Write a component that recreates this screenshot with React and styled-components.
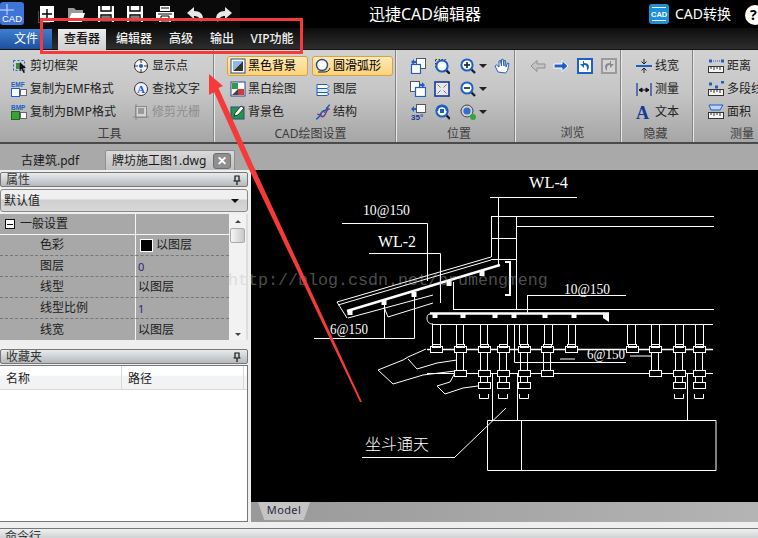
import React from 'react'
import styled, { createGlobalStyle } from 'styled-components'

const GlobalStyle = createGlobalStyle`
    html, body { margin:0; padding:0; background:#000; }
    * { box-sizing:border-box; }
`
const FONT = `"Noto Sans", "Noto Sans CJK SC", sans-serif`

const Page = styled.div`
    position:relative;
    width:758px;
    height:538px;
    overflow:hidden;
    display:flex;
    flex-direction:column;
    background:#efefef;
    font-family:${FONT};
    font-size:12px;
    color:#1a1a1a;
    line-height:1;
`
/* ---------- title bar ---------- */
const TitleBar = styled.div`
    height:28px;
    background:#000;
    display:flex;
    align-items:center;
    color:#fff;
`
const QuickBar = styled.div`
    display:flex;
    align-items:center;
    gap:13px;
    width:240px;
    padding-left:38px;
    height:28px;
    background:#0a0a0a;
`
const AppTitle = styled.div`
    flex:1;
    text-align:center;
    padding-right:38px;
    font-size:16px;
`
const ConvertBox = styled.div`
    display:flex;
    align-items:center;
    gap:6px;
    width:110px;
    padding-left:1px;
    font-size:14px;
`
const HelpDot = styled.div`
    position:absolute;
    left:745px;
    top:5px;
    width:20px;
    height:20px;
    border-radius:50%;
    background:#fff;
    color:#000;
    font-weight:700;
    font-size:14px;
    line-height:20px;
    padding-left:5px;
`
const LogoWrap = styled.div`
    position:absolute;
    left:0;
    top:2px;
`
/* ---------- ribbon tabs ---------- */
const TabRow = styled.div`
    height:22px;
    display:flex;
    align-items:flex-end;
    background:linear-gradient(#0d0d0d, #2e2e2e);
    border-bottom:1px solid #141414;
`
const FileButton = styled.div`
    width:52px;
    height:20px;
    margin-right:6px;
    background:linear-gradient(#3f7fd0, #1d4f9e);
    color:#fff;
    text-align:center;
    line-height:20px;
    font-size:12px;
`
const RibbonTab = styled.div`
    height:${({ $active }) => ($active ? 21 : 20)}px;
    width:${({ $w }) => $w}px;
    margin-right:${({ $gap }) => $gap}px;
    text-align:center;
    line-height:20px;
    font-weight:500;
    color:${({ $active }) => ($active ? '#111' : '#f2f2f2')};
    background:${({ $active }) => ($active ? 'linear-gradient(#ececec, #cfcfcf)' : 'transparent')};
    margin-bottom:${({ $active }) => ($active ? -1 : 0)}px;
`
/* ---------- ribbon ---------- */
const Ribbon = styled.div`
    height:94px;
    display:flex;
    background:linear-gradient(#d2d2d2, #c6c6c6 45%, #a6a6a6);
    border-bottom:2px solid #4a4a4a;
`
const Group = styled.div`
    width:${({ $w }) => $w}px;
    flex:none;
    display:flex;
    flex-direction:column;
    padding-top:4px;
    padding-left:${({ $pad }) => $pad || 0}px;
    border-right:1px solid #848484;
    box-shadow:1px 0 0 #e8e8e8;
    margin-right:2px;
    &:last-child { border-right:none; box-shadow:none; margin-right:0; }
`
const ToolGrid = styled.div`
    flex:1;
    display:grid;
    grid-template-columns:${({ $cols }) => $cols};
    grid-auto-rows:23px;
    align-items:center;
`
const GroupLabel = styled.div`
    height:20px;
    margin-left:-${({ $pad }) => $pad || 0}px;
    padding-left:${({ $shift = 0 }) => Math.max($shift * 2, 0)}px;
    padding-right:${({ $shift = 0 }) => Math.max(-$shift * 2, 0)}px;
    text-align:center;
    color:#3c3c3c;
    font-size:12px;
    line-height:22px;
`
const Tool = styled.div`
    display:flex;
    align-items:center;
    gap:${({ $gap }) => $gap ?? 3}px;
    white-space:nowrap;
    color:${({ $off }) => ($off ? '#8e8e8e' : '#222')};
    ${({ $on }) => $on && `
        height:20px;
        width:81px;
        margin-left:-3px;
        padding-left:2px;
        border:1px solid #d9a23c;
        border-radius:3px;
        background:linear-gradient(#fdeab8, #fbd27a);
        color:#000;
    `}
`
const Caret = styled.span`
    width:0;
    height:0;
    border-left:4px solid transparent;
    border-right:4px solid transparent;
    border-top:4px solid #222;
    margin-left:3px;
`
/* ---------- document tabs ---------- */
const DocStrip = styled.div`
    height:26px;
    display:flex;
    align-items:flex-end;
    padding-left:21px;
    background:#a9a9a9;
`
const DocTab = styled.div`
    height:${({ $active }) => ($active ? 20 : 18)}px;
    display:flex;
    align-items:center;
    gap:7px;
    ${({ $active }) => ($active
        ? `padding:0 3px 0 6px; background:linear-gradient(#dadada,#c0c0c0); border:1px solid #8f8f8f; border-bottom:none; border-radius:2px 2px 0 0; margin-left:26px;`
        : '')}
`
const CloseBox = styled.div`
    width:18px;
    height:16px;
    border:1px solid #6f6f6f;
    border-radius:3px;
    background:#8f8f8f;
    color:#fff;
    font-size:12px;
    font-weight:700;
    text-align:center;
    line-height:14px;
`
/* ---------- body ---------- */
const Body = styled.div`
    height:352px;
    display:flex;
`
const SidePanel = styled.div`
    width:248px;
    flex:none;
    display:flex;
    flex-direction:column;
    padding-top:2px;
`
const PanelHeader = styled.div`
    height:15px;
    flex:none;
    display:flex;
    justify-content:space-between;
    align-items:center;
    padding:0 5px;
    border:1px solid #777;
    border-radius:2px;
    background:linear-gradient(#e9ebec, #b5b9bd);
    color:#333;
`
const Picker = styled.div`
    height:23px;
    margin-top:2px;
    flex:none;
    display:flex;
    justify-content:space-between;
    align-items:center;
    padding:0 3px;
    border:1px solid #8a8a8a;
    border-radius:3px;
    background:linear-gradient(#f0f0f0, #f0f0f0 40%, #cfcfcf 50%, #d8d8d8);
    color:#222;
`
const PickerCaret = styled(Caret)`
    border-top-color:#111;
    border-left-width:4px;
    border-right-width:4px;
    margin-right:5px;
`
const PropBox = styled.div`
    display:flex;
    height:126px;
    flex:none;
    margin-top:2px;
    background:#f2f2f2;
    border-right:2px solid #ddd;
`
const PropList = styled.div`
    width:229px;
    flex:none;
    background:#a8a8a8;
`
const PropRow = styled.div`
    height:21px;
    display:grid;
    grid-template-columns:136px 93px;
    align-items:center;
    border-bottom:1px ${({ $head }) => ($head ? 'solid #f4f4f4' : 'dashed #777')};
    &:last-child { border-bottom:none; }
`
const PropName = styled.div`
    height:100%;
    display:flex;
    align-items:center;
    gap:5px;
    padding-left:${({ $head }) => ($head ? 5 : 40)}px;
    border-right:1px solid #f4f4f4;
    color:#202020;
`
const PropValue = styled.div`
    display:flex;
    align-items:center;
    gap:4px;
    padding-left:2px;
    color:${({ $num }) => ($num ? '#2a2a70' : '#202020')};
    font-size:${({ $num }) => ($num ? 11 : 12)}px;
`
const MinusBox = styled.span`
    width:10px;
    height:10px;
    background:#fff;
    border:1px solid #111;
    display:flex;
    align-items:center;
    justify-content:center;
    &::after { content:''; width:6px; height:1px; background:#111; }
`
const Swatch = styled.span`
    width:11px;
    height:11px;
    background:#000;
    outline:1px solid #fff;
    margin-left:3px;
`
const ScrollBar = styled.div`
    flex:1;
    display:flex;
    flex-direction:column;
    align-items:center;
    justify-content:space-between;
    padding:6px 0 4px;
`
const ScrollThumb = styled.div`
    width:15px;
    height:15px;
    margin:0 0 auto;
    border:1px solid #aaa;
    border-radius:2px;
    background:linear-gradient(90deg, #f6f6f6, #c8c8c8);
`
const ArrowUp = styled.span`
    width:0;
    height:0;
    margin-bottom:5px;
    border-left:3px solid transparent;
    border-right:3px solid transparent;
    border-bottom:3px solid #444;
`
const ArrowDown = styled.span`
    width:0;
    height:0;
    border-left:3px solid transparent;
    border-right:3px solid transparent;
    border-top:3px solid #444;
`
const FavHeader = styled(PanelHeader)`
    margin-top:9px;
`
const FavBox = styled.div`
    flex:1;
    margin-top:1px;
    background:#fff;
    border:1px solid #777;
    border-left:none;
`
const FavHead = styled.div`
    height:24px;
    display:grid;
    grid-template-columns:122px 122px;
    border-bottom:1px solid #d8d8d8;
    background:linear-gradient(#fff, #fff 40%, #f2f3f4 45%);
`
const FavCell = styled.div`
    padding:7px 0 0 6px;
    border-right:1px solid #d8d8d8;
    color:#222;
`
const Canvas = styled.div`
    flex:1;
    margin-left:3px;
    display:flex;
    flex-direction:column;
    background:#000;
`
const Drawing = styled.svg`
    display:block;
    flex:none;
`
const ModelBar = styled.div`
    height:20px;
    padding-left:7px;
    background:linear-gradient(90deg, #999, #b4b4b4);
`
const ModelTab = styled.div`
    width:52px;
    height:18px;
    background:#c4c4c4;
    clip-path:polygon(0 0, 100% 0, 88% 100%, 12% 100%);
    text-align:center;
    line-height:16px;
    font-size:11px;
    color:#2a2a40;
    letter-spacing:.4px;
`
const CommandBar = styled.div`
    margin-top:6px;
    height:10px;
    flex:none;
    padding:2px 0 0 5px;
    border-top:1px solid #777;
    background:linear-gradient(#f0f0f0, #cfd2d4);
    color:#333;
    overflow:hidden;
`
/* ---------- overlays ---------- */
const RedFrame = styled.div`
    position:absolute;
    left:40px;
    top:18px;
    width:263px;
    height:36px;
    border:3px solid #f63a3a;
`
const ArrowLayer = styled.svg`
    position:absolute;
    left:0;
    top:0;
    pointer-events:none;
`
const Watermark = styled.div`
    position:absolute;
    left:228px;
    top:273px;
    font-family:"Liberation Mono", monospace;
    font-size:16.67px;
    color:rgba(190,190,190,.42);
    white-space:nowrap;
`

/* ---------- icons ---------- */
const Glyph = ({ size = 16, w, children }) => (
    <svg width={w || size} height={size} viewBox={`0 0 ${w || size} ${size}`} style={{ flex: 'none' }}>{children}</svg>
)
const B = '#1d5fc4'
const Doc = ({ x = 0, y = 0, w = 9, h = 10, fill = '#fff', stroke = '#556' }) => (
    <rect x={x + .5} y={y + .5} width={w} height={h} fill={fill} stroke={stroke} />
)
const Lens = ({ sign, x = 7, y = 7 }) => (
    <g>
        <path d={`M${x + 4} ${y + 4}l4 4`} stroke="#123" strokeWidth="2.4" />
        <circle cx={x} cy={y} r="5.6" fill="#fff" stroke={B} strokeWidth="2" />
        {sign && <path d={`M${x - 3} ${y}h6`} stroke="#123" strokeWidth="1.6" />}
        {sign === '+' && <path d={`M${x} ${y - 3}v6`} stroke="#123" strokeWidth="1.6" />}
    </g>
)
const icons = {
    crop: <><rect x="2.5" y="2.5" width="11" height="10" fill="none" stroke={B} strokeDasharray="2 2" /><rect x="5" y="5" width="4" height="6" fill="#3a8a3a" /><path d="M9 4l6 6-3 .5 2 4-1.5.5-2-4-2 2z" fill="#111" /></>,
    emf: <><text x="0" y="6" fontSize="6.5" fontWeight="700" fill={B} fontFamily="Liberation Sans">EMF</text><Doc y={7} w={8} h={8} stroke={B} /><Doc x={9} y={8} w={6} h={6} stroke="#667" /></>,
    bmp: <><text x="0" y="6" fontSize="6.5" fontWeight="700" fill={B} fontFamily="Liberation Sans">BMP</text><Doc y={7} w={8} h={8} fill="#3aa03a" stroke="#1a6a1a" /><Doc x={9} y={8} w={6} h={6} stroke="#667" /></>,
    point: <><circle cx="8" cy="8" r="6.5" fill="#f4f6fa" stroke="#333" /><path d="M8 1v4M8 11v4M1 8h4M11 8h4" stroke="#333" /><circle cx="8" cy="8" r="2" fill={B} /></>,
    findText: <><circle cx="8" cy="8" r="6.5" fill="#eef" stroke="#333" /><text x="4" y="12" fontSize="11" fontWeight="700" fill={B} fontFamily="Liberation Serif">A</text></>,
    trim: <><rect x="2.5" y="2.5" width="11" height="11" fill="#d4d4d4" stroke="#8a8a8a" /><rect x="5" y="4" width="6" height="6" fill="#9a9a9a" /><path d="M0 13h16M3 0v16" stroke="#8a8a8a" /></>,
    blackBg: <><rect x="1" y="1" width="14" height="14" fill="#fff" stroke="#264a8a" /><path d="M3 13L13 3v10z" fill="#333" /><path d="M3 3h10L3 13z" fill="#8fb6e8" /></>,
    arc: <><circle cx="7" cy="7" r="5.5" fill="#fff" stroke="#264a8a" strokeWidth="1.4" /><path d="M3 14h6c3 0 5-1 6-4" fill="none" stroke="#222" /></>,
    mono: <><rect x="1" y="1" width="14" height="14" fill="#fff" stroke="#264a8a" /><path d="M2 8h6V2H2z" fill="#2f9a4a" /><path d="M8 8h6v6H8z" fill="#d03a3a" /><path d="M2 14L8 8v6z" fill="#444" /></>,
    layers: <><path d="M2 3.5h10l2 2-2 2H2z" fill="#fff" stroke={B} /><path d="M2 7.5h10l2 2-2 2H2z" fill="#dfe9fa" stroke={B} /><path d="M2 11.5h10l2 1.5-2 1.5H2z" fill="#fff" stroke={B} /></>,
    bgColor: <><rect x="1" y="3" width="13" height="12" fill="#1f9a44" stroke="#264a8a" /><path d="M5 9l6-7 3 2-6 7-4 1z" fill="#fff" stroke="#333" /></>,
    dna: <><path d="M1 15C5 15 5 7 9 7s3-6 6-6" fill="none" stroke={B} strokeWidth="1.6" /><path d="M2 10c4 0 4 5 7 2s2-8 6-7" fill="none" stroke="#7a2a8a" strokeWidth="1.2" /><path d="M5 9l2 3M8 6l2 3M11 3l2 2" stroke="#555" /></>,
    pageIn: <><Doc x={6} w={9} h={10} /><rect x="1.5" y="6.5" width="9" height="9" fill="#fff" stroke={B} strokeWidth="1.2" /><path d="M1 4l3-3v2h3v2H4v2z" fill={B} /></>,
    marquee: <><rect x="1.5" y="1.5" width="10" height="9" fill="none" stroke="#333" strokeDasharray="1.5 1.5" /><Lens x={8} y={8} /></>,
    plus: <Lens sign="+" />,
    minus: <Lens sign="-" />,
    hand: <path d="M4 14L1 8l1.5-1L5 9V3l1.5-.5L7.5 8V1.5L9 1l1 7V2.5l1.5.2L12 9l1.5-4 1.5.5-1.5 7-2 2.5z" fill="#fff" stroke="#2b5fb0" />,
    pageOut: <><Doc w={9} h={10} /><rect x="5.5" y="6.5" width="10" height="9" fill="#fff" stroke={B} strokeWidth="1.2" /><path d="M15 4l-3-3v2H9v2h3v2z" fill={B} /></>,
    fit: <><rect x="1" y="1" width="14" height="14" fill="#e8e8e8" stroke="#14389a" strokeWidth="1.6" /><path d="M3.5 3.5l3 3M12.5 3.5l-3 3M3.5 12.5l3-3M12.5 12.5l-3-3" stroke="#777" /></>,
    rot: <><Doc x={6} w={9} h={8} /><path d="M1 5l3-3v2h3v2H4v2z" fill={B} /><text x="1" y="15.5" fontSize="8" fontWeight="700" fill="#14389a" fontFamily="Liberation Sans">35°</text></>,
    orbit: <><Lens x={8} y={7} /><path d="M3 7a5 5 0 0 1 10 0" fill="none" stroke={B} strokeWidth="2.4" /><rect x="6" y="5" width="4" height="4" fill={B} /></>,
    globe: <><circle cx="7" cy="7" r="6" fill="#cfcfcf" stroke="#444" /><circle cx="7" cy="7" r="3.6" fill="#2f6fd0" /><circle cx="13" cy="13" r="3" fill="#2fa83a" /></>,
    back: <path d="M1 8l6-5.5V6h8v4H7v3.5z" fill="#c4c4c4" stroke="#8f8f8f" />,
    next: <path d="M15 8L9 2.5V6H1v4h8v3.5z" fill={B} stroke="#fff" />,
    undoPage: <><rect x="1" y="1" width="14" height="14" fill="#fff" stroke={B} strokeWidth="2" /><path d="M6 3v3H3l4 4 0-3c3 0 3 2 3 6 3-3 3-8-3-8V3z" fill={B} /></>,
    redoPage: <><rect x="1" y="1" width="14" height="14" fill="#d4d4d4" stroke="#9a9a9a" strokeWidth="2" /><path d="M10 3v3h3l-4 4V7c-3 0-3 2-3 6-3-3-3-8 3-8V3z" fill="#8a8a8a" /></>,
    width: <><path d="M0 8h16" stroke={B} strokeWidth="2" /><path d="M8 1v4M8 11v4M5.5 3.5L8 6l2.5-2.5M5.5 12.5L8 10l2.5 2.5" stroke="#222" fill="none" /></>,
    measure: <><path d="M1 2v13M15 2v13" stroke="#14389a" strokeWidth="1.2" /><path d="M3 9h10M3 9l3-2v4zM13 9l-3-2v4z" stroke="#111" fill="#111" /></>,
    textA: <text x="0" y="15" fontSize="18" fontWeight="700" fill="#14389a" fontFamily="Liberation Serif">A</text>,
    dist: <><path d="M1 3h3M13 3h3" stroke={B} strokeWidth="3" /><path d="M5 3h7" stroke={B} strokeDasharray="1 1" /><rect x=".5" y="8.5" width="15" height="6" fill="#f4f4f0" stroke="#333" /><path d="M3 9v2M6 9v3M9 9v2M12 9v3" stroke="#333" /></>,
    multi: <><path d="M1 3h3M7 6h3M13 1h3" stroke={B} strokeWidth="3" /><rect x=".5" y="8.5" width="15" height="6" fill="#f4f4f0" stroke="#333" /><path d="M3 9v2M6 9v3M9 9v2M12 9v3" stroke="#333" /></>,
    area: <><path d="M1 1h14l-3 5H3z" fill="#bcd4f6" stroke={B} /><rect x=".5" y="8.5" width="15" height="6" fill="#f4f4f0" stroke="#333" /><path d="M3 9v2M6 9v3M9 9v2M12 9v3" stroke="#333" /></>,
}
const Ic = ({ n }) => <Glyph>{icons[n]}</Glyph>

const Pin = () => (
    <Glyph size={10}><path d="M3 1h4v5H3zM1.5 6h7M5 6v4" fill="none" stroke="#111" strokeWidth="1.2" /></Glyph>
)
const Logo = () => (
    <svg width="24" height="23" viewBox="0 0 24 23">
        <rect width="24" height="23" rx="3" fill="#3f74d8" />
        <path d="M0 8h14M7 2v11" stroke="#cfe0ff" />
        <text x="2" y="20" fontSize="9.500" fill="#fff" fontFamily="Liberation Sans">CAD</text>
    </svg>
)
const CadBadge = () => (
    <svg width="20" height="20" viewBox="0 0 20 20">
        <rect width="20" height="20" rx="3" fill="#1f8fd8" />
        <path d="M3 3.5h14M3 16.5h14" stroke="#fff" />
        <text x="2" y="13" fontSize="7.5" fontWeight="700" fill="#fff" fontFamily="Liberation Sans">CAD</text>
    </svg>
)
const quick = {
    add: <><path d="M0 5v12h12" fill="none" stroke="#888" /><rect x="2" y="0" width="14" height="16" fill="#fff" /><path d="M9 3v10M4 8h10" stroke="#000" strokeWidth="1.4" /></>,
    open: <><path d="M1 15V2h6l2 2h7v3H5L2 15z" fill="#9a9a9a" /><path d="M4.500 7H18l-3 9H1z" fill="#fff" /></>,
    save: <><rect x="0" y="0" width="16" height="16" fill="#fff" /><path d="M3 0v5h10V0M3 9h10v7H3z" fill="none" stroke="#000" strokeWidth="1.4" /><path d="M4 11h8M4 13h8" stroke="#000" /></>,
    print: <><path d="M4 0h10v5H4zM0 6h18v7h-3v3H3v-3H0z" fill="#fff" /><path d="M5 10h8v5H5z" fill="#fff" stroke="#000" /><path d="M2 8h14M5 2h8" stroke="#000" /></>,
    undo: <path d="M0 7l7-6v4c6 0 9 3 9 8l-2 3c-1-4-3-6-7-6v3z" fill="#e8e8e8" />,
    redo: <path d="M16 7L9 1v4C3 5 0 8 0 13l2 3c1-4 3-6 7-6v3z" fill="#e8e8e8" />,
}
const Quick = ({ n, w = 16 }) => <Glyph size={17} w={w}>{quick[n]}</Glyph>

/* ---------- the cad drawing, in page coordinates ---------- */
const topUnits = [436, 460, 484, 503, 524, 547, 571, 632, 655, 679, 699]
const midUnits = [460, 484, 503, 524, 547, 655, 679, 699]
const lowUnits = [484, 503, 524, 679, 699]
const stems = [432, 440, 456, 463, 480, 487, 507, 514, 519, 527, 544, 552, 568, 575, 627, 635, 651, 659, 675, 683, 695, 703]
const beamDots = [435, 463, 495, 514, 545, 574]
const roofDots = [[350, 312], [384, 302], [414, 294], [449, 283], [482, 273]]
const lines = [
    'M342 223.500H427.500V281', 'M369 253.500H440.500V303',
    'M337 302L491 257', 'M338 305L491 260', 'M337 302L347 318', 'M348 318L433 295', 'M388 317L433 303', 'M388 317L384 307',
    'M384.500 302V338.500M414.500 295V338.500', 'M314 338.500H414.500',
    'M490 197.500H577', 'M498.500 197V265', 'M491.500 216V257', 'M491 216.500H714', 'M516.500 216V309', 'M516 226.500H714',
    'M491 238.500H516', 'M491 259.500H516', 'M453.500 282V309', 'M453 309.500H714', 'M527 295.500H626', 'M527.500 295V313',
    'M433 324.500H713', 'M427 318c0 4 2 6 6 6', 'M430 314c-2 0-3 2-3 4',
    'M427 373.500H713', 'M492.500 373V420', 'M517.500 373V420', 'M687.500 373V420',
    'M487.500 420.500H716V470.500H487.500z', 'M521.500 420V470', 'M506 408L455 457', 'M455 457.500H362',
    'M514.500 340V362.500H626', 'M560 359H575', 'M630 356H651',
    'M378 370L403 360L408 357L426 349', 'M378 370L393 384L423 375L455 371', 'M408 359L417 369L437 363L457 360',
    'M437 386L445 394L463 388L478 386', 'M437 386L450 382L455 373',
]

const CadDrawing = () => (
    <Drawing width="507" height="332" viewBox="251 170 507 332">
        <g fill="none" stroke="#fff">
            {lines.map((d, i) => <path key={i} d={d} />)}
            {stems.map(x => <path key={x} d={`M${x + .5} 324V345`} />)}
            <path d="M347 311L500 265" strokeWidth="2.4" />
            <path d="M430 313.500H609" strokeWidth="2.4" />
            <path d="M427 349.500H713" strokeWidth="1.6" />
            <path d="M505 262h5v33h-5" strokeWidth="2" />
            {midUnits.map(x => <path key={x} d={`M${x - 3.500} 352V370M${x + 3.500} 352V370`} />)}
            {lowUnits.map(x => <path key={x} d={`M${x - 3.500} 376V388M${x + 3.500} 376V388M${x - 4.500} 394V398.500H${x + 4.500}V394`} />)}
            {topUnits.map(x => <g key={x}><rect x={x - 5.500} y="346.500" width="12" height="6" fill="#000" /><rect x={x - 3.500} y="344.500" width="8" height="3" /></g>)}
            {midUnits.map(x => <rect key={x} x={x - 5.500} y="370.500" width="12" height="6" fill="#000" />)}
            {lowUnits.map(x => <rect key={x} x={x - 5.500} y="382.500" width="12" height="6" fill="#000" />)}
        </g>
        <g fill="#fff">
            {beamDots.map(x => <rect key={x} x={x - 2.500} y="314" width="5" height="4" />)}
            {roofDots.map(([x, y]) => <rect key={x} x={x - 2.500} y={y - 2} width="5" height="5" />)}
            <path d="M603 314h6v8l-3-2-3-2z" />
            <g fontFamily="Liberation Serif, serif" fontSize="17" stroke="none">
                <text x="529" y="188" textLength="39" lengthAdjust="spacingAndGlyphs">WL-4</text>
                <text x="378" y="247" textLength="38" lengthAdjust="spacingAndGlyphs">WL-2</text>
                <text x="363" y="215" fontSize="15" textLength="47" lengthAdjust="spacingAndGlyphs">10@150</text>
                <text x="564" y="294" fontSize="15" textLength="46" lengthAdjust="spacingAndGlyphs">10@150</text>
                <text x="330" y="334" fontSize="15" textLength="38" lengthAdjust="spacingAndGlyphs">6@150</text>
                <text x="587" y="359" fontSize="15" textLength="38" lengthAdjust="spacingAndGlyphs">6@150</text>
            </g>
            <text x="365" y="450" fontSize="16" fontFamily={FONT} fontWeight="300">坐斗通天</text>
        </g>
    </Drawing>
)

const propRows = [
    { name: '色彩', value: '以图层', swatch: true },
    { name: '图层', value: '0', num: true },
    { name: '线型', value: '以图层' },
    { name: '线型比例', value: '1', num: true },
    { name: '线宽', value: '以图层' },
]

const App = () => (
    <Page>
        <GlobalStyle />
        <TitleBar>
            <QuickBar>
                <Quick n="add" />
                <Quick n="open" w={18} />
                <Quick n="save" />
                <Quick n="save" />
                <Quick n="print" w={18} />
                <Quick n="undo" />
                <Quick n="redo" />
            </QuickBar>
            <AppTitle>迅捷CAD编辑器</AppTitle>
            <ConvertBox><CadBadge />CAD转换</ConvertBox>
        </TitleBar>
        <LogoWrap><Logo /></LogoWrap>
        <HelpDot>?</HelpDot>

        <TabRow>
            <FileButton>文件</FileButton>
            <RibbonTab $active $w={48} $gap={5}>查看器</RibbonTab>
            <RibbonTab $w={46} $gap={6}>编辑器</RibbonTab>
            <RibbonTab $w={36} $gap={5}>高级</RibbonTab>
            <RibbonTab $w={36} $gap={2}>输出</RibbonTab>
            <RibbonTab $w={60}>VIP功能</RibbonTab>
        </TabRow>

        <Ribbon>
            <Group $w={214} $pad={11}>
                <ToolGrid $cols="122px 1fr">
                    <Tool><Ic n="crop" />剪切框架</Tool>
                    <Tool><Ic n="point" />显示点</Tool>
                    <Tool><Ic n="emf" />复制为EMF格式</Tool>
                    <Tool><Ic n="findText" />查找文字</Tool>
                    <Tool><Ic n="bmp" />复制为BMP格式</Tool>
                    <Tool $off><Ic n="trim" />修剪光栅</Tool>
                </ToolGrid>
                <GroupLabel $pad={11} $shift={3}>工具</GroupLabel>
            </Group>
            <Group $w={180} $pad={14}>
                <ToolGrid $cols="85px 1fr">
                    <Tool $on $gap={2}><Ic n="blackBg" />黑色背景</Tool>
                    <Tool $on $gap={2}><Ic n="arc" />圆滑弧形</Tool>
                    <Tool $gap={2}><Ic n="mono" />黑白绘图</Tool>
                    <Tool $gap={2}><Ic n="layers" />图层</Tool>
                    <Tool $gap={2}><Ic n="bgColor" />背景色</Tool>
                    <Tool $gap={2}><Ic n="dna" />结构</Tool>
                </ToolGrid>
                <GroupLabel $pad={14} $shift={5}>CAD绘图设置</GroupLabel>
            </Group>
            <Group $w={117} $pad={12}>
                <ToolGrid $cols="24px 26px 34px 1fr">
                    <Tool><Ic n="pageIn" /></Tool>
                    <Tool><Ic n="marquee" /></Tool>
                    <Tool $gap={0}><Ic n="plus" /><Caret /></Tool>
                    <Tool><Ic n="hand" /></Tool>
                    <Tool><Ic n="pageOut" /></Tool>
                    <Tool><Ic n="fit" /></Tool>
                    <Tool $gap={0}><Ic n="minus" /><Caret /></Tool>
                    <span />
                    <Tool><Ic n="rot" /></Tool>
                    <Tool><Ic n="orbit" /></Tool>
                    <Tool $gap={0}><Ic n="globe" /><Caret /></Tool>
                </ToolGrid>
                <GroupLabel $pad={12} $shift={3}>位置</GroupLabel>
            </Group>
            <Group $w={104} $pad={13}>
                <ToolGrid $cols="23px 24px 24px 1fr">
                    <Tool><Ic n="back" /></Tool>
                    <Tool><Ic n="next" /></Tool>
                    <Tool><Ic n="undoPage" /></Tool>
                    <Tool><Ic n="redoPage" /></Tool>
                </ToolGrid>
                <GroupLabel $pad={13} $shift={4}>浏览</GroupLabel>
            </Group>
            <Group $w={70} $pad={13}>
                <ToolGrid $cols="1fr">
                    <Tool><Ic n="width" />线宽</Tool>
                    <Tool><Ic n="measure" />测量</Tool>
                    <Tool><Ic n="textA" />文本</Tool>
                </ToolGrid>
                <GroupLabel $pad={13} $shift={-2}>隐藏</GroupLabel>
            </Group>
            <Group $w={90} $pad={13}>
                <ToolGrid $cols="1fr">
                    <Tool><Ic n="dist" />距离</Tool>
                    <Tool><Ic n="multi" />多段线</Tool>
                    <Tool><Ic n="area" />面积</Tool>
                </ToolGrid>
                <GroupLabel $pad={13} $shift={2}>测量</GroupLabel>
            </Group>
        </Ribbon>

        <DocStrip>
            <DocTab>古建筑.pdf</DocTab>
            <DocTab $active>牌坊施工图1.dwg<CloseBox>✕</CloseBox></DocTab>
        </DocStrip>

        <Body>
            <SidePanel>
                <PanelHeader>属性<Pin /></PanelHeader>
                <Picker>默认值<PickerCaret /></Picker>
                <PropBox>
                    <PropList>
                        <PropRow $head>
                            <PropName $head><MinusBox />一般设置</PropName>
                        </PropRow>
                        {propRows.map(row => (
                            <PropRow key={row.name}>
                                <PropName>{row.name}</PropName>
                                <PropValue $num={row.num}>{row.swatch && <Swatch />}{row.value}</PropValue>
                            </PropRow>
                        ))}
                    </PropList>
                    <ScrollBar>
                        <ArrowUp />
                        <ScrollThumb />
                        <ArrowDown />
                    </ScrollBar>
                </PropBox>
                <FavHeader>收藏夹<Pin /></FavHeader>
                <FavBox>
                    <FavHead>
                        <FavCell>名称</FavCell>
                        <FavCell>路径</FavCell>
                    </FavHead>
                </FavBox>
            </SidePanel>
            <Canvas>
                <CadDrawing />
                <ModelBar><ModelTab>Model</ModelTab></ModelBar>
            </Canvas>
        </Body>

        <CommandBar>命令行</CommandBar>

        <Watermark>http://blog.csdn.net/prumengmeng</Watermark>
        <RedFrame />
        <ArrowLayer width="758" height="538" viewBox="0 0 758 538">
            <path d="M209 74L223 86L218.500 88L253 165L362 402L360 402L247 165L214 92L209 95z" fill="#f63a3a" />
        </ArrowLayer>
    </Page>
)

export default App
